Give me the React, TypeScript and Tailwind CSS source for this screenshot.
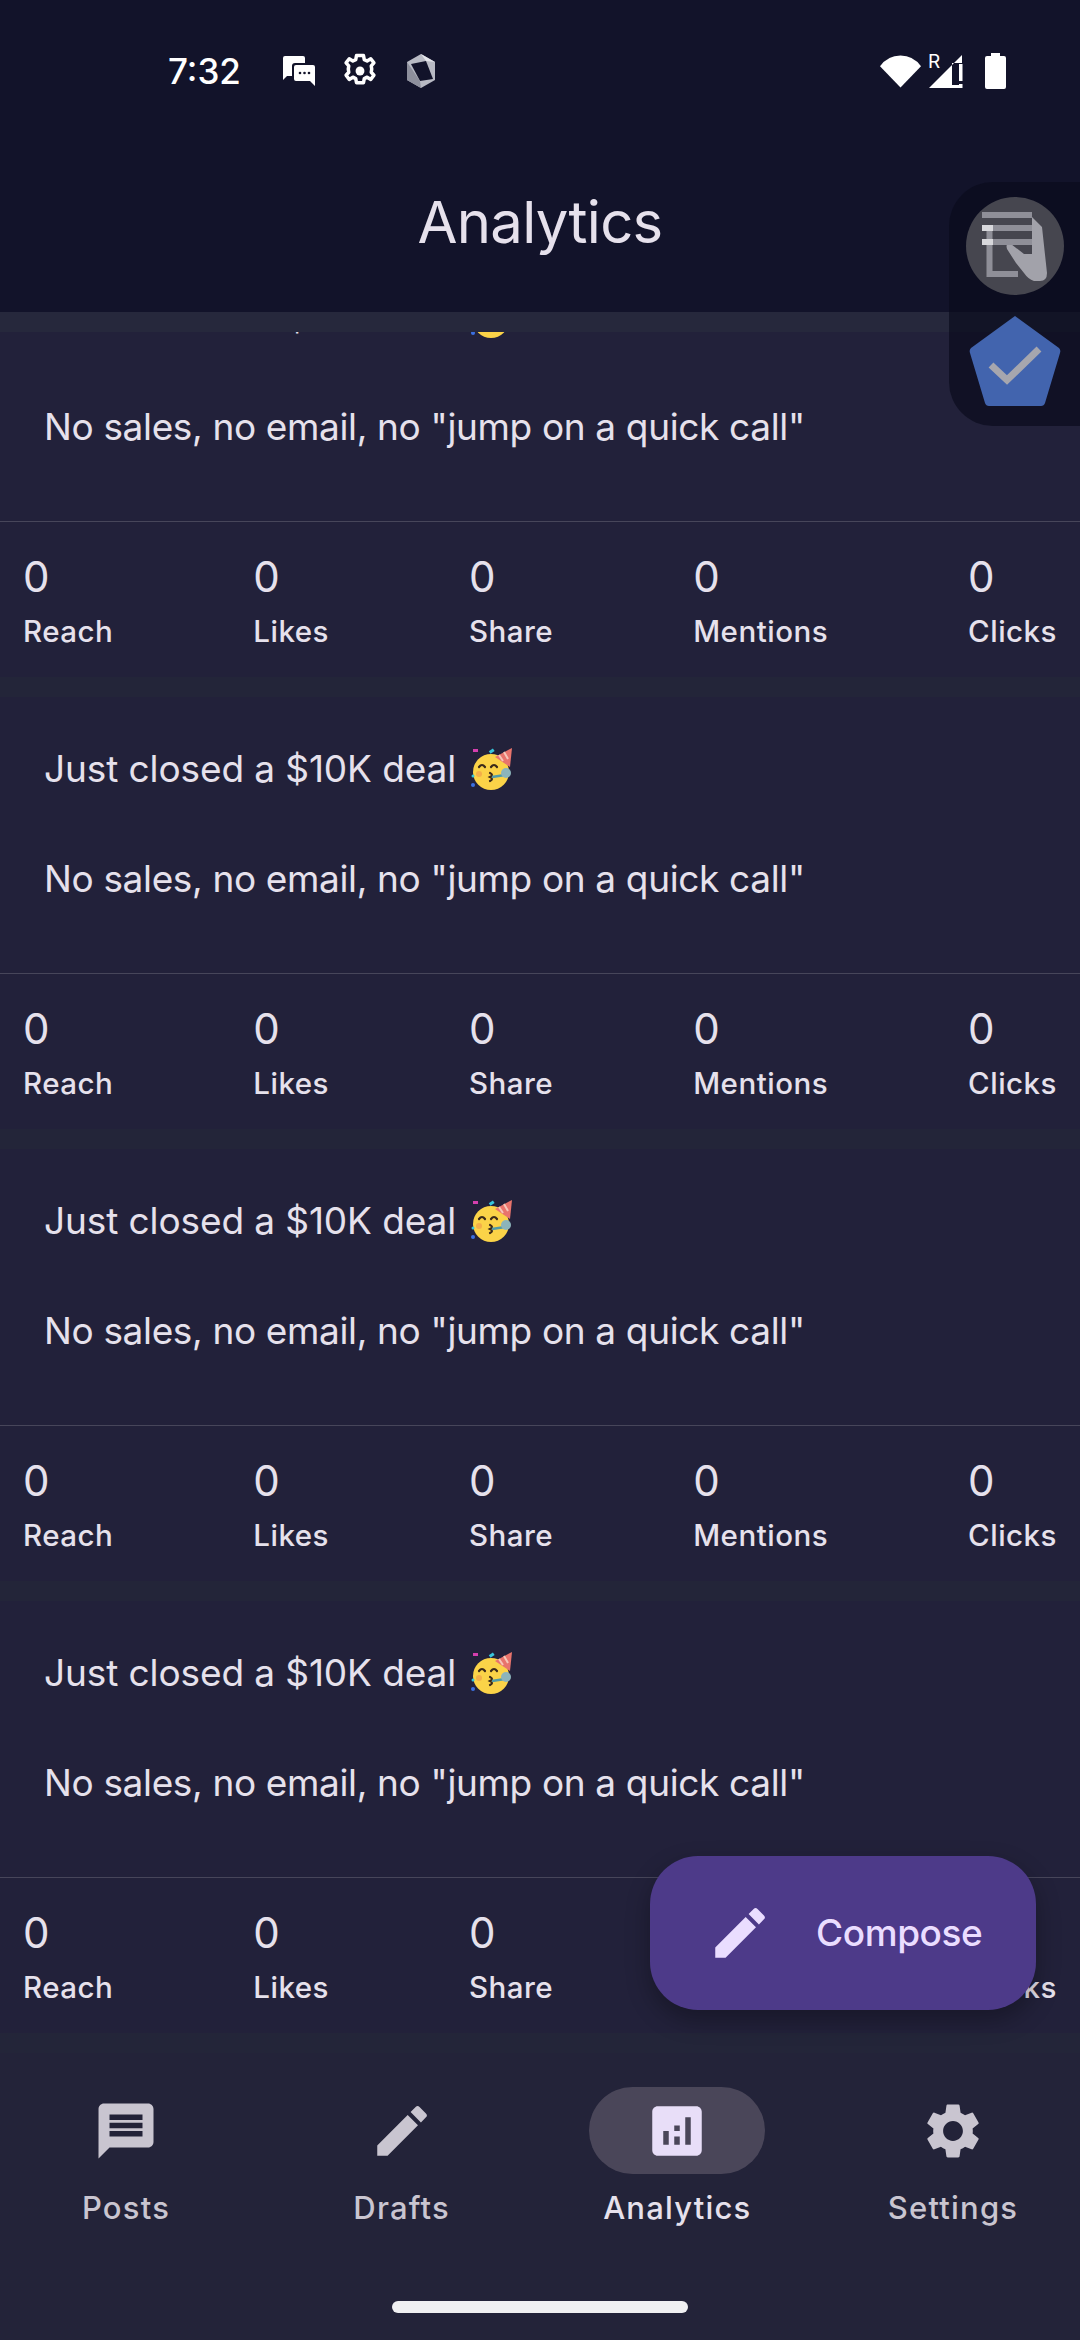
import { MdAnalytics, MdEdit, MdMessage, MdSettings } from 'react-icons/md';

const stats = ['Reach', 'Likes', 'Share', 'Mentions', 'Clicks'];

const PartyFace = () => (
  <svg className="ml-[14px] h-[46px] w-[44px] shrink-0" viewBox="0 0 44 46">
    <circle cx="21" cy="26" r="18" fill="#fbd348" />
    <path d="M25 11 L42 2 L40 21 Z" fill="#e8746c" />
    <path d="M29 9 L33 15 M34 6 L38 13" stroke="#f6c6b8" strokeWidth="2" />
    <circle cx="9" cy="28" r="3" fill="#f0a04a" opacity="0.7" />
    <path d="M9 21 q3 -4 6 0 M21 21 q3 -4 6 0" fill="none" stroke="#3b2a1a" strokeWidth="2.2" strokeLinecap="round" />
    <path d="M20 27 q4 2 0 4 q4 2 0 4" fill="none" stroke="#3b2a1a" strokeWidth="2.2" strokeLinecap="round" />
    <path d="M22 31 L35 29" stroke="#4f9aa8" strokeWidth="2.5" />
    <circle cx="36" cy="27" r="5" fill="#8cb4ba" />
    <rect x="3" y="3" width="5" height="3" fill="#d43fae" />
    <rect x="19" y="4" width="5" height="3" fill="#38c5dc" transform="rotate(-35 21 5)" />
    <circle cx="3" cy="39" r="2" fill="#3b6fe0" />
    <circle cx="3" cy="30" r="1.5" fill="#38c5dc" />
  </svg>
);

const PostCard = () => (
  <div>
    <div className="h-[276px] bg-[#22213a] pl-[44px] pt-[48px] text-[37px] leading-[48px] text-[#e6e1ec]">
      <div className="flex items-center tracking-[-0.1px]">
        <span>Just closed a $10K deal</span>
        <PartyFace />
      </div>
      <p className="mt-[62px] tracking-[-0.35px]">No sales, no email, no "jump on a quick call"</p>
    </div>
    <div className="h-[156px] border-t border-[#47465a] bg-[#22213a] pt-[30px]">
      <div className="flex justify-between px-[23px]">
        {stats.map((label) => (
          <div key={label} className="flex flex-col text-[#e6e1ec]">
            <span className="text-[42px] leading-[50px]">0</span>
            <span className="mt-[6px] text-[29.5px] font-medium leading-[46px] tracking-[0.5px]">{label}</span>
          </div>
        ))}
      </div>
    </div>
    <div className="h-[20px] bg-[#232539]" />
  </div>
);

const NavItem = ({ label, active, icon }: { label: string; active?: boolean; icon: React.ReactNode }) => (
  <div className="flex w-[252px] flex-col items-center">
    <div className={['flex h-[87px] w-[176px] items-center justify-center rounded-[44px]', active ? 'bg-[#4a4659] text-[#e8def8]' : 'text-[#c9c5d0]'].join(' ')}>
      {icon}
    </div>
    <span className={['mt-[12px] text-[31px] font-medium leading-[44px] tracking-[1.2px]', active ? 'text-[#e6e1ec]' : 'text-[#c9c5d0]'].join(' ')}>
      {label}
    </span>
  </div>
);

export default function App() {
  return (
    <div className="relative flex h-[2340px] w-[1080px] flex-col overflow-hidden bg-[#22213a] font-['Inter',sans-serif]">
      <header className="h-[312px] shrink-0 bg-[#12132a]">
        <div className="flex h-[142px] items-center pl-[168px] pr-[74px] text-white">
          <span className="w-[100px] text-[35px] font-medium leading-none">7:32</span>
          <svg className="ml-[15px] h-[30px] w-[32px]" viewBox="0 0 32 30" fill="white">
            <path d="M2 0h18a2 2 0 0 1 2 2v5H12a3 3 0 0 0-3 3v10H4l-4 4V2a2 2 0 0 1 2-2z" />
            <path d="M13 9h17a2 2 0 0 1 2 2v19l-5-5H13a2 2 0 0 1-2-2V11a2 2 0 0 1 2-2z" />
            <circle cx="17" cy="17" r="1.3" fill="#12132a" />
            <circle cx="21.5" cy="17" r="1.3" fill="#12132a" />
            <circle cx="26" cy="17" r="1.3" fill="#12132a" />
          </svg>
          <svg className="ml-[26px] h-[38px] w-[38px]" viewBox="0 0 24 24" fill="none" stroke="white" strokeWidth="2.2" strokeLinejoin="round">
            <path d="M12 2.2l2.2 0 .5 2.6 1.8.9 2.3-1.4 2 2.6-1.7 1.9.3 2-.3 2 1.7 1.9-2 2.6-2.3-1.4-1.8.9-.5 2.6h-4.4l-.5-2.6-1.8-.9-2.3 1.4-2-2.6 1.7-1.9-.3-2 .3-2-1.7-1.9 2-2.6 2.3 1.4 1.8-.9.5-2.6z" />
            <circle cx="12" cy="12" r="2.8" fill="white" stroke="none" />
          </svg>
          <svg className="ml-[27px] h-[34px] w-[30px]" viewBox="0 0 30 34">
            <path d="M15 0 L29 8 V26 L15 34 L1 26 V8 Z" fill="#b8bac4" />
            <path d="M5 10 L20 7 L27 25 L14 27 Z" fill="#12132a" />
            <path d="M1 8 L14 27 L15 34 L1 26 Z" fill="#8d8f9c" />
            <path d="M15 0 L29 8 L20 7 Z" fill="#e4e5ea" />
          </svg>
          <div className="ml-auto flex items-center">
            <svg className="h-[33px] w-[41px]" viewBox="0 0 42 33" fill="white">
              <path d="M21 33 L0 11 Q8 0 21 0 Q34 0 42 11 Z" />
            </svg>
            <svg className="ml-[7px] h-[36px] w-[38px]" viewBox="0 0 38 36" fill="white">
              <text x="0" y="15" fontSize="19" fontFamily="Inter" fill="white">R</text>
              <path d="M1 35 L34 2 V10 H24 V32 H34 V35 Z" />
              <rect x="31" y="11" width="3.5" height="17" />
              <rect x="31" y="31" width="3.5" height="4" />
            </svg>
            <svg className="ml-[19px] h-[36px] w-[21px]" viewBox="0 0 21 36" fill="white">
              <path d="M6 0h9v3h4a2 2 0 0 1 2 2v29a2 2 0 0 1-2 2H2a2 2 0 0 1-2-2V5a2 2 0 0 1 2-2h4z" />
            </svg>
          </div>
        </div>
        <h1 className="mt-[45px] text-center text-[58px] font-normal leading-[70px] tracking-[-0.7px] text-[#e6e1ec]">Analytics</h1>
      </header>

      <div className="relative z-10 h-[20px] shrink-0 bg-[#26283c]" />

      <main className="min-h-0 flex-1 overflow-hidden">
        <div className="-mt-[87px]">
          <PostCard />
          <PostCard />
          <PostCard />
          <PostCard />
        </div>
      </main>

      <nav className="flex h-[287px] shrink-0 flex-col bg-[#232339] pt-[34px]">
        <div className="flex justify-between pr-[1px]">
          <NavItem label="Posts" icon={<MdMessage size={66} />} />
          <NavItem label="Drafts" icon={<MdEdit size={66} />} />
          <NavItem label="Analytics" active icon={<MdAnalytics size={66} />} />
          <NavItem label="Settings" icon={<MdSettings size={66} />} />
        </div>
        <div className="mx-auto mt-[71px] h-[12px] w-[296px] rounded-full bg-[#f0f0f2]" />
      </nav>

      <button
        type="button"
        className="absolute left-[650px] top-[1856px] flex h-[154px] w-[386px] items-center rounded-[48px] bg-[#4d3a89] pl-[57px] text-[#eaddff] shadow-[0_10px_24px_rgba(0,0,0,0.3)]"
      >
        <MdEdit size={66} />
        <span className="ml-[43px] text-[37px] font-medium tracking-[-0.4px]">Compose</span>
      </button>

      <div className="absolute left-[949px] top-[182px] z-20 flex h-[244px] w-[131px] flex-col items-center rounded-l-[44px] bg-[#0a0b1c]/70">
        <div className="mt-[15px] flex h-[98px] w-[98px] items-center justify-center rounded-full bg-[#46464f]">
          <svg className="h-[70px] w-[66px]" viewBox="0 0 66 70" fill="none">
            <path d="M7.5 14 V63 H36" stroke="#8f8f98" strokeWidth="6" />
            <path d="M50 6 L60 16 L65 62 Q65 70 58 70 H52 Q46 68 42 62 L34 52 L25 38 Q23 31 29 33 L42 43 H50 Z" fill="#a2a2aa" />
            <rect x="0" y="1" width="50" height="6" fill="#8f8f98" />
            <rect x="0" y="14" width="50" height="6" fill="#8f8f98" />
            <rect x="0" y="28" width="50" height="6" fill="#8f8f98" />
            <rect x="0" y="14" width="11" height="6" fill="#d8d8dc" />
            <rect x="0" y="28" width="11" height="6" fill="#d8d8dc" />
          </svg>
        </div>
        <svg className="mt-[20px] h-[92px] w-[92px]" viewBox="0 0 92 92">
          <path d="M46 1 L90 33 Q92 35 91 38 L76 88 Q75 91 72 91 H20 Q17 91 16 88 L1 38 Q0 35 2 33 Z" fill="#4264ae" />
          <path d="M22 50 L38 65 L70 34" fill="none" stroke="#a6a6ae" strokeWidth="7" />
        </svg>
      </div>
    </div>
  );
}
